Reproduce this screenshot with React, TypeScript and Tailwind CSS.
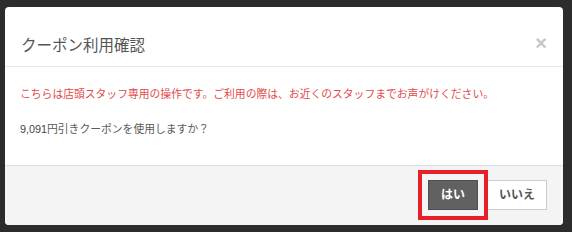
import React from "react";

const font = { fontFamily: '"Liberation Sans", "Noto Sans CJK JP", sans-serif' };

export default function App() {
  return (
    <div
      className="w-[572px] h-[232px] bg-[#2c2c2c] pl-[5px] pt-[7px] overflow-hidden"
      style={font}
    >
      {/* Modal */}
      <div className="w-[558px] bg-white rounded-[4px] flex flex-col">
        {/* Header */}
        <div className="h-[60px] flex justify-between border-b border-[#e8e8e8] pl-4 pr-4">
          <h4 className="self-end pb-[11px] text-[15.5px] leading-[18px] text-[#555555] font-normal">
            クーポン利用確認
          </h4>
          <button className="mt-[13px] mr-0 text-[20px] leading-none font-bold text-[#c6c6c6]">
            ×
          </button>
        </div>

        {/* Body */}
        <div className="h-[98px] px-[15px] pt-[20px] text-[10.8px] leading-[15px]">
          <p className="text-[#e24b4b]">
            こちらは店頭スタッフ専用の操作です。ご利用の際は、お近くのスタッフまでお声がけください。
          </p>
          <p className="mt-[20px] text-[#5a5a5a]">
            <span className="text-[#444444]">9,091</span>円引きクーポンを使用しますか？
          </p>
        </div>

        {/* Footer */}
        <div className="h-[60px] bg-[#f4f4f4] border-t border-[#dcdcdc] rounded-b-[4px] flex justify-end items-start pt-[14px] pr-4 gap-[9px]">
          <div className="relative">
            <button className="w-[50px] h-[30px] bg-[#616161] border border-[#4e4e4e] text-white text-[12px] font-bold">
              はい
            </button>
            <div className="absolute -inset-[10px] border-4 border-[#e81e28] pointer-events-none" />
          </div>
          <button className="w-[60px] h-[30px] bg-white border border-[#cccccc] text-[#555555] text-[12px] font-semibold">
            いいえ
          </button>
        </div>
      </div>
    </div>
  );
}
